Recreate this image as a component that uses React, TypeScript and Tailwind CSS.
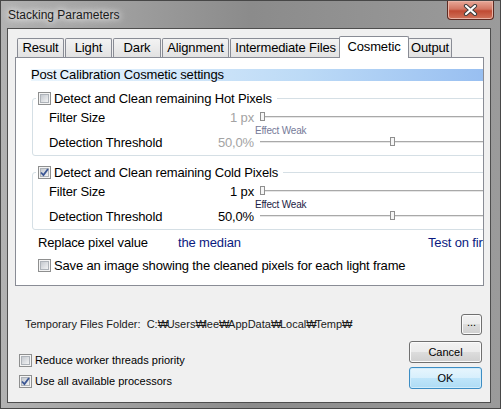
import type { ReactNode } from 'react';

function CheckBox({ checked }: { checked?: boolean }) {
    return (
        <span className="relative flex h-[13px] w-[13px] shrink-0 border border-[#8e8f8f] bg-[#f4f4f4] p-[1px]">
            <span className="block h-full w-full border border-[#aeb3b9] bg-linear-to-br from-[#c5c9cf] to-[#f2f3f4]" />
            {checked && (
                <svg className="absolute left-[1px] top-[1px]" width="9" height="9" viewBox="0 0 9 9">
                    <path d="M1 4.5 L3.4 7 L8 1" fill="none" stroke="#3b5694" strokeWidth="1.8" />
                </svg>
            )}
        </span>
    );
}

function Slider({ at }: { at: number }) {
    return (
        <div className="relative ml-[6px] mt-[1px] h-[9px] w-[300px] self-start">
            <div className="absolute left-0 right-0 top-[4px] h-[2px] border-t border-[#a9a9a9] bg-[#e6e6e6]" />
            <div className="absolute top-0 h-[9px] w-[5px] border border-[#8f8f8f] bg-[#f6f6f6]" style={{ left: at }} />
        </div>
    );
}

function Group({ title, checked }: { title: string; checked?: boolean }) {
    const val = checked ? 'text-black' : 'text-[#a3a3a3]';
    return (
        <fieldset className="ml-[1px] w-[540px] rounded-[3px] border border-[#d5dfe5] pb-[5px]">
            <legend className="ml-[3px] flex h-[13px] items-center pl-[2px] pr-[5px]">
                <CheckBox checked={checked} />
                <span className="ml-[3px] leading-[13px]">{title}</span>
            </legend>
            <div className="pl-[16px]">
                <div className="mt-[6px] flex h-[14px] items-center">
                    <div className="flex w-[205px] justify-between">
                        <span>Filter Size</span>
                        <span className={val}>1 px</span>
                    </div>
                    <Slider at={0} />
                </div>
                <div className={`ml-[206px] h-[11px] text-[10px] leading-[11px] tracking-[-0.2px] ${checked ? 'text-[#1c1c44]' : 'text-[#767a98]'}`}>
                    Effect Weak
                </div>
                <div className="flex h-[14px] items-center">
                    <div className="flex w-[205px] justify-between">
                        <span>Detection Threshold</span>
                        <span className={val}>50,0%</span>
                    </div>
                    <Slider at={130} />
                </div>
            </div>
        </fieldset>
    );
}

function Btn({ children, def, className }: { children: ReactNode; def?: boolean; className: string }) {
    return (
        <div
            className={`flex items-center justify-center rounded-[3px] border text-[11px] text-black ${
                def
                    ? 'border-[#3c8dc4] bg-[linear-gradient(#e7f5fd,#d7effc_50%,#bfe5fa_50%,#afdcf5)] shadow-[inset_0_0_0_1px_#d0ecfb]'
                    : 'border-[#707070] bg-[linear-gradient(#f2f2f2,#ebebeb_50%,#dddddd_50%,#cfcfcf)] shadow-[inset_0_0_0_1px_#fbfbfb]'
            } ${className}`}
        >
            {children}
        </div>
    );
}

const W = () => <span className="inline-block w-[9px] text-center">₩</span>;

export default function App() {
    return (
        <div className="h-[409px] w-[501px] font-['Liberation_Sans',Arial,sans-serif] text-black">
            <div className="flex h-full w-full flex-col border border-[#474747] bg-linear-to-r from-[#b2b2b2] via-[#8b8b8b] to-[#9b9b9b]">
                {/* title bar */}
                <div className="flex h-[27px] shrink-0 justify-between">
                    <span className="pl-[7px] pt-[7px] text-[12px] leading-[14px] text-[#1a1a1a] [text-shadow:0_0_6px_#ffffff,0_0_10px_#ffffff]">
                        Stacking Parameters
                    </span>
                    <div className="mr-[6px] flex h-[19px] w-[47px] items-center justify-center rounded-b-[4px] border border-t-0 border-[#5c2a22] bg-[linear-gradient(#e8a898,#d27662_45%,#c04a33_55%,#d0735b)] shadow-[inset_0_0_0_1px_#eab3a5]">
                        <svg width="15" height="12" viewBox="0 0 15 12">
                            <path d="M3 2 L12 10 M12 2 L3 10" stroke="#3d3d3d" strokeWidth="4.2" strokeLinecap="round" />
                            <path d="M3 2 L12 10 M12 2 L3 10" stroke="#ffffff" strokeWidth="2.2" strokeLinecap="round" />
                        </svg>
                    </div>
                </div>

                {/* client area */}
                <div className="mb-[5px] ml-[6px] mr-[9px] flex flex-1 flex-col border border-[#4e4e4e] bg-[#f0f0f0]">
                    <div className="pl-[7px] pt-[7px]">
                        <div className="flex h-[21px] items-end pl-[2px] text-[13px] tracking-[-0.15px]">
                            <div className="flex h-[19px] w-[47px] items-center justify-center rounded-t-[2px] border border-b-0 border-[#898c95] bg-linear-to-b from-[#f3f3f3] to-[#e2e2e2]">Result</div>
                            <div className="ml-[1px] flex h-[19px] w-[47px] items-center justify-center rounded-t-[2px] border border-b-0 border-[#898c95] bg-linear-to-b from-[#f3f3f3] to-[#e2e2e2]">Light</div>
                            <div className="ml-[1px] flex h-[19px] w-[48px] items-center justify-center rounded-t-[2px] border border-b-0 border-[#898c95] bg-linear-to-b from-[#f3f3f3] to-[#e2e2e2]">Dark</div>
                            <div className="ml-[1px] flex h-[19px] w-[67px] items-center justify-center rounded-t-[2px] border border-b-0 border-[#898c95] bg-linear-to-b from-[#f3f3f3] to-[#e2e2e2]">Alignment</div>
                            <div className="ml-[1px] flex h-[19px] w-[111px] items-center justify-center rounded-t-[2px] border border-b-0 border-[#898c95] bg-linear-to-b from-[#f3f3f3] to-[#e2e2e2]">Intermediate Files</div>
                            <div className="relative z-10 -mb-[1px] ml-[-2px] flex h-[22px] w-[70px] items-center justify-center rounded-t-[2px] border border-b-0 border-[#898c95] bg-white pb-[2px]">Cosmetic</div>
                            <div className="ml-[-1px] flex h-[19px] w-[44px] items-center justify-center rounded-t-[2px] border border-b-0 border-[#898c95] bg-linear-to-b from-[#f3f3f3] to-[#e2e2e2]">Output</div>
                        </div>

                        {/* tab page */}
                        <div className="h-[229px] w-[469px] overflow-hidden border border-[#898c95] bg-white text-[13px] tracking-[-0.15px]">
                            <div className="w-[560px] pl-[15px] pt-[11px]">
                                <div className="h-[12px] bg-linear-to-r from-[#eaf5fd] via-[#bcdaf6] to-[#86b1ee] leading-[12px]">
                                    Post Calibration Cosmetic settings
                                </div>
                                <div className="mt-[11px]">
                                    <Group title="Detect and Clean remaining Hot Pixels" />
                                </div>
                                <div className="mt-[10px]">
                                    <Group title="Detect and Clean remaining Cold Pixels" checked />
                                </div>
                                <div className="ml-[7px] mt-[6px] flex h-[14px] items-center">
                                    <span className="w-[140px]">Replace pixel value</span>
                                    <span className="w-[250px] text-[#0a1a80]">the median</span>
                                    <span className="text-[#0a1a80]">Test on first frame</span>
                                </div>
                                <div className="ml-[7px] mt-[9px] flex h-[13px] items-center">
                                    <CheckBox />
                                    <span className="ml-[3px]">Save an image showing the cleaned pixels for each light frame</span>
                                </div>
                            </div>
                        </div>
                    </div>

                    {/* bottom area */}
                    <div className="flex flex-1 pl-[11px] pr-[8px] text-[11px]">
                        <div className="flex flex-col">
                            <div className="ml-[6px] mt-[28px] flex h-[21px] items-center text-[#1a1a1a]">
                                Temporary Files Folder:&nbsp; C:<W />Users<W />lee<W />AppData<W />Local<W />Temp<W />
                            </div>
                            <div className="mt-[15px] flex h-[21px] items-center">
                                <CheckBox />
                                <span className="ml-[3px]">Reduce worker threads priority</span>
                            </div>
                            <div className="flex h-[21px] items-center">
                                <CheckBox checked />
                                <span className="ml-[3px]">Use all available processors</span>
                            </div>
                        </div>
                        <div className="ml-auto flex flex-col items-end">
                            <Btn className="mt-[28px] h-[21px] w-[21px] pb-[4px]">...</Btn>
                            <Btn className="mt-[6px] h-[22px] w-[73px]">Cancel</Btn>
                            <Btn def className="mt-[4px] h-[22px] w-[73px]">OK</Btn>
                        </div>
                    </div>
                </div>
            </div>
        </div>
    );
}
